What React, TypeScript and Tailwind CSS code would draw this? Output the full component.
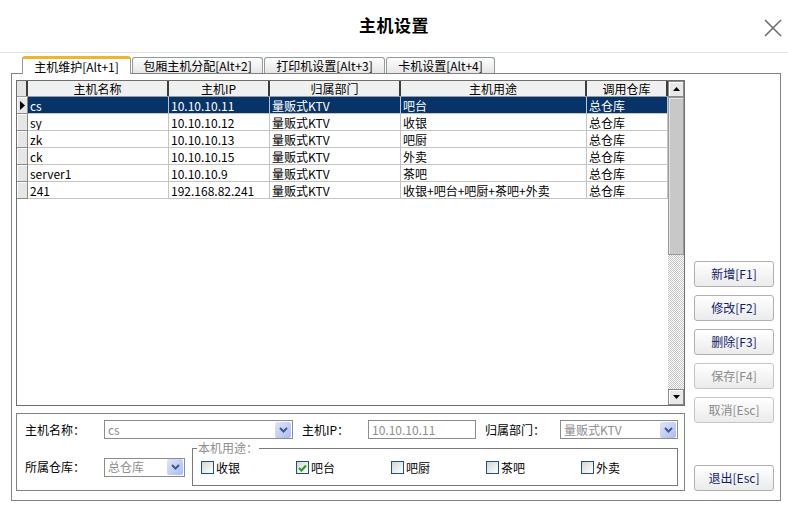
import React from "react";

const rows = [
  ["cs", "10.10.10.11", "量贩式KTV", "吧台", "总仓库"],
  ["sy", "10.10.10.12", "量贩式KTV", "收银", "总仓库"],
  ["zk", "10.10.10.13", "量贩式KTV", "吧厨", "总仓库"],
  ["ck", "10.10.10.15", "量贩式KTV", "外卖", "总仓库"],
  ["server1", "10.10.10.9", "量贩式KTV", "茶吧", "总仓库"],
  ["241", "192.168.82.241", "量贩式KTV", "收银+吧台+吧厨+茶吧+外卖", "总仓库"],
];

const headers = ["主机名称", "主机IP", "归属部门", "主机用途", "调用仓库"];
const colW = ["w-[141px]", "w-[101px]", "w-[131px]", "w-[186px]", "w-[81px]"];

const tabs = [
  { label: "主机维护[Alt+1]", w: "w-[109px]", active: true },
  { label: "包厢主机分配[Alt+2]", w: "w-[131px]", active: false },
  { label: "打印机设置[Alt+3]", w: "w-[121px]", active: false },
  { label: "卡机设置[Alt+4]", w: "w-[109px]", active: false },
];

const buttons = [
  { label: "新增[F1]", disabled: false },
  { label: "修改[F2]", disabled: false },
  { label: "删除[F3]", disabled: false },
  { label: "保存[F4]", disabled: true },
  { label: "取消[Esc]", disabled: true },
];

function ArrowBox() {
  return (
    <div className="flex h-[16px] w-[16px] shrink-0 items-center justify-center rounded-[2px] bg-gradient-to-br from-[#dfe5fb] to-[#a9bdf2]">
      <svg width="9" height="6" viewBox="0 0 9 6">
        <path d="M1 1 L4.5 4.5 L8 1" stroke="#3f5a86" strokeWidth="2" fill="none" />
      </svg>
    </div>
  );
}

function Combo({ value, w }: { value: string; w: string }) {
  return (
    <div className={`flex h-[19px] items-center border border-[#8c8c8c] bg-white pl-[3px] pr-px ${w}`}>
      <span className="flex-1 text-[12px] leading-[16px] text-[#8e8e8e]">{value}</span>
      <ArrowBox />
    </div>
  );
}

function Check({ label, checked }: { label: string; checked?: boolean }) {
  return (
    <div className="flex w-[95px] items-center gap-[2px]">
      <div className="flex h-[13px] w-[13px] items-center justify-center border border-[#1c5180] bg-gradient-to-br from-[#d6d6d0] to-[#ffffff]">
        {checked && (
          <svg width="9" height="8" viewBox="0 0 9 8">
            <path d="M1 4 L3.5 6.5 L8 1.5" stroke="#21a121" strokeWidth="2" fill="none" />
          </svg>
        )}
      </div>
      <span className="text-[12px] leading-[16px] text-black">{label}</span>
    </div>
  );
}

function ScrollBtn({ up }: { up?: boolean }) {
  return (
    <div className="flex h-[16px] w-[16px] items-center justify-center border border-[#8a8a8a] bg-[#e8e8e8] shadow-[inset_1px_1px_0_#ffffff]">
      <svg width="7" height="4" viewBox="0 0 7 4">
        <path d={up ? "M0 4 L3.5 0 L7 4 Z" : "M0 0 L3.5 4 L7 0 Z"} fill="#000" />
      </svg>
    </div>
  );
}

export default function App() {
  return (
    <div className="h-[514px] w-[788px] overflow-hidden bg-white font-['Noto_Sans_CJK_SC',sans-serif] text-black">
      {/* header */}
      <div className="relative flex h-[53px] items-center justify-center border-b border-[#e2e2e2]">
        <span className="-mt-[3px] text-[17px] font-bold tracking-[0.5px]">主机设置</span>
        <svg className="absolute right-[6px] top-[19px]" width="18" height="18" viewBox="0 0 18 18">
          <path d="M1 1 L17 17 M17 1 L1 17" stroke="#6c6c6c" strokeWidth="1.6" />
        </svg>
      </div>

      {/* tabs */}
      <div className="flex h-[20px] items-end gap-px pl-[22px]">
        {tabs.map((t) =>
          t.active ? (
            <div
              key={t.label}
              className={`relative z-10 -mb-px flex h-[18px] items-center justify-center rounded-t-[3px] border-x border-t-[3px] border-x-[#919b9c] border-t-[#f2b233] bg-white text-[12px] leading-[14px] ${t.w}`}
            >
              {t.label}
            </div>
          ) : (
            <div
              key={t.label}
              className={`flex h-[16px] items-center justify-center rounded-t-[3px] border-x border-t border-[#919b9c] bg-gradient-to-b from-[#fefefe] to-[#e6e6e6] text-[12px] leading-[14px] ${t.w}`}
            >
              {t.label}
            </div>
          )
        )}
      </div>

      {/* panel */}
      <div className="ml-[11px] flex h-[428px] w-[770px] border border-[#828282] pb-[9px] pl-[4px] pr-[5px] pt-[6px]">
        <div className="flex w-[669px] flex-col gap-[7px]">
          {/* grid */}
          <div className="flex h-[326px] border border-[#6e6e6e] bg-white">
            <div className="flex w-[651px] flex-col">
              <div className="flex h-[16px] border-b border-[#9a9a9a] bg-[#f0f0f0]">
                <div className="w-[11px] border-r-2 border-[#3c3c3c] bg-[#e4e4e4]" />
                {headers.map((h, i) => (
                  <div
                    key={h}
                    className={`flex items-center justify-center border-r-2 border-[#3c3c3c] text-[12px] leading-[15px] ${colW[i]}`}
                  >
                    {h}
                  </div>
                ))}
              </div>
              {rows.map((r, ri) => {
                const sel = ri === 0;
                return (
                  <div key={ri} className="flex h-[17px]">
                    <div className="flex w-[11px] items-center justify-center border-b border-r border-[#8a8a8a] bg-[#e6e6e6] shadow-[inset_1px_1px_0_#ffffff]">
                      {sel && (
                        <svg width="5" height="9" viewBox="0 0 5 9">
                          <path d="M0 0 L5 4.5 L0 9 Z" fill="#000" />
                        </svg>
                      )}
                    </div>
                    {r.map((c, ci) => (
                      <div
                        key={ci}
                        className={`flex items-center overflow-hidden whitespace-nowrap border-b border-r border-[#c4c4c4] pl-[2px] text-[12px] leading-[15px] ${colW[ci]} ${
                          sel ? "bg-[#063468] text-white" : "bg-white text-black"
                        }`}
                      >
                        {c}
                      </div>
                    ))}
                  </div>
                );
              })}
            </div>
            {/* scrollbar */}
            <div className="flex w-[16px] flex-col">
              <ScrollBtn up />
              <div className="h-[158px] border border-[#9a9a9a] bg-[#c8c8c8] shadow-[inset_1px_1px_0_#e4e4e4]" />
              <div className="flex-1 bg-[repeating-conic-gradient(#c4c4c4_0%_25%,#ffffff_0%_50%)] bg-[length:2px_2px]" />
              <ScrollBtn />
            </div>
          </div>

          {/* bottom form */}
          <div className="flex h-[78px] flex-col border border-[#828282] pb-[4px] pl-[8px] pr-[6px] pt-[6px]">
            <div className="flex h-[19px] items-center text-[12px] leading-[16px]">
              <span className="w-[79px]">主机名称：</span>
              <Combo value="cs" w="w-[189px]" />
              <span className="ml-[9px] w-[66px]">主机IP：</span>
              <div className="flex h-[19px] w-[108px] items-center border border-[#8c8c8c] pl-[3px] text-[#8e8e8e]">
                10.10.10.11
              </div>
              <span className="ml-[9px] w-[75px]">归属部门：</span>
              <Combo value="量贩式KTV" w="w-[118px]" />
            </div>
            <div className="mt-[9px] flex flex-1 items-center text-[12px] leading-[16px]">
              <span className="w-[79px]">所属仓库：</span>
              <Combo value="总仓库" w="w-[81px]" />
              <div className="relative ml-[7px] flex h-[38px] w-[486px] items-center border border-[#7a7a7a] pl-[8px] pt-[1px]">
                <span className="absolute -top-[9px] left-[4px] bg-white px-[1px] text-[12px] leading-[16px] text-[#8e8e8e]">
                  本机用途：
                </span>
                <Check label="收银" />
                <Check label="吧台" checked />
                <Check label="吧厨" />
                <Check label="茶吧" />
                <Check label="外卖" />
              </div>
            </div>
          </div>
        </div>

        {/* buttons */}
        <div className="ml-[9px] flex w-[80px] flex-col gap-[8px] pt-[181px]">
          {buttons.map((b) => (
            <div
              key={b.label}
              className={`flex h-[26px] items-center justify-center rounded-[3px] border bg-gradient-to-b from-[#ffffff] to-[#ebebeb] text-[12px] leading-[16px] ${
                b.disabled ? "border-[#c6c6c6] text-[#8a8a8a]" : "border-[#b0b0b0] text-[#101a6e]"
              }`}
            >
              {b.label}
            </div>
          ))}
          <div className="mt-auto flex h-[26px] items-center justify-center rounded-[3px] border border-[#b0b0b0] bg-gradient-to-b from-[#ffffff] to-[#ebebeb] text-[12px] leading-[16px] text-[#101a6e]">
            退出[Esc]
          </div>
        </div>
      </div>
    </div>
  );
}
